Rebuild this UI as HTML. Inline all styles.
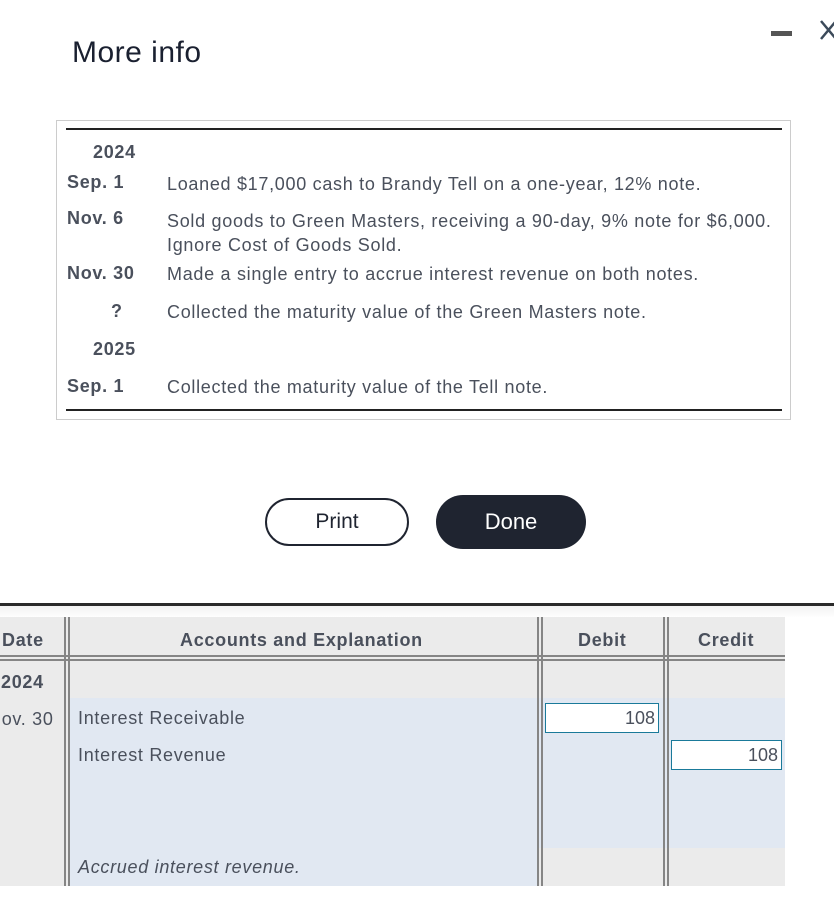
<!DOCTYPE html>
<html><head><style>
*{margin:0;padding:0;box-sizing:border-box}
body{width:834px;height:900px;background:#fff;position:relative;overflow:hidden;font-family:"Liberation Sans",Arial,sans-serif;color:#4a505c}
.a{position:absolute;white-space:nowrap}
.b{font-weight:bold}
.t{font-size:18px;letter-spacing:0.7px}
.vl{position:absolute;width:2px;background:#858585}
.hl{position:absolute;height:2px;background:#858585}
</style></head><body>
<div class="a" style="left:72px;top:36px;font-size:30px;color:#1a2030;letter-spacing:0.5px">More info</div>
<div class="a" style="left:771px;top:31px;width:21px;height:5px;background:#555"></div>
<svg class="a" style="left:818px;top:18px" width="16" height="24"><path d="M3 3 L18 21 M18 3 L3 21" stroke="#3c4a5a" stroke-width="2.5" fill="none"/></svg>

<div class="a" style="left:56px;top:120px;width:735px;height:300px;border:1px solid #ccc"></div>
<div class="a" style="left:66px;top:128px;width:716px;height:2px;background:#222"></div>
<div class="a" style="left:66px;top:409px;width:716px;height:2px;background:#222"></div>

<div class="a b t" style="left:93px;top:142px">2024</div>
<div class="a b t" style="left:67px;top:172px">Sep. 1</div>
<div class="a t" style="left:167px;top:174px">Loaned $17,000 cash to Brandy Tell on a one-year, 12% note.</div>
<div class="a b t" style="left:67px;top:208px">Nov. 6</div>
<div class="a t" style="left:167px;top:209px;line-height:24px">Sold goods to Green Masters, receiving a 90-day, 9% note for $6,000.<br>Ignore Cost of Goods Sold.</div>
<div class="a b t" style="left:67px;top:263px">Nov. 30</div>
<div class="a t" style="left:167px;top:264px">Made a single entry to accrue interest revenue on both notes.</div>
<div class="a b t" style="left:111px;top:301px">?</div>
<div class="a t" style="left:167px;top:302px">Collected the maturity value of the Green Masters note.</div>
<div class="a b t" style="left:93px;top:339px">2025</div>
<div class="a b t" style="left:67px;top:376px">Sep. 1</div>
<div class="a t" style="left:167px;top:377px">Collected the maturity value of the Tell note.</div>

<div class="a" style="left:265px;top:498px;width:144px;height:48px;border:2.5px solid #1f2430;border-radius:24px;font-size:21px;color:#1f2430;text-align:center;line-height:43px">Print</div>
<div class="a" style="left:436px;top:495px;width:150px;height:54px;background:#1f2430;border-radius:27px;font-size:22px;color:#fff;text-align:center;line-height:54px">Done</div>

<div class="a" style="left:0;top:603px;width:834px;height:3px;background:#2a2a2a"></div>
<div class="a" style="left:0;top:606px;width:834px;height:12px;background:linear-gradient(#f2f2f2,#fff)"></div>
<div class="a" style="left:0;top:617px;width:785px;height:269px;background:#ebebeb"></div>
<div class="a" style="left:70px;top:698px;width:715px;height:150px;background:#e1e8f2"></div>
<div class="a" style="left:70px;top:848px;width:467px;height:38px;background:#e1e8f2"></div>

<div class="hl" style="left:0;top:655px;width:785px"></div>
<div class="hl" style="left:0;top:659px;width:785px"></div>
<div class="vl" style="left:64px;top:617px;height:269px"></div>
<div class="vl" style="left:68px;top:617px;height:269px"></div>
<div class="vl" style="left:537px;top:617px;height:269px"></div>
<div class="vl" style="left:541px;top:617px;height:269px"></div>
<div class="vl" style="left:663px;top:617px;height:269px"></div>
<div class="vl" style="left:667px;top:617px;height:269px"></div>

<div class="a b t" style="left:2px;top:630px">Date</div>
<div class="a b t" style="left:180px;top:630px">Accounts and Explanation</div>
<div class="a b t" style="left:578px;top:630px">Debit</div>
<div class="a b t" style="left:698px;top:630px">Credit</div>
<div class="a b t" style="left:1px;top:672px">2024</div>
<div class="a t" style="left:-3px;top:709px">lov. 30</div>
<div class="a t" style="left:78px;top:708px">Interest Receivable</div>
<div class="a t" style="left:78px;top:745px">Interest Revenue</div>
<div class="a t" style="left:78px;top:857px;font-style:italic">Accrued interest revenue.</div>
<div class="a t" style="left:545px;top:703px;width:114px;height:30px;background:#fff;border:1px solid #1a7a9a;text-align:right;padding-right:3px;line-height:28px;letter-spacing:0">108</div>
<div class="a t" style="left:671px;top:740px;width:111px;height:30px;background:#fff;border:1px solid #1a7a9a;text-align:right;padding-right:3px;line-height:28px;letter-spacing:0">108</div>
</body></html>
